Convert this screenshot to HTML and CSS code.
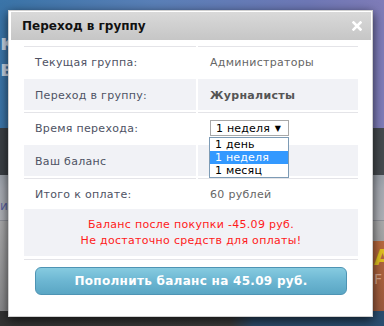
FILE: index.html
```html
<!DOCTYPE html>
<html lang="ru">
<head>
<meta charset="utf-8">
<link rel="stylesheet" href="styles.css">
</head>
<body>
<div class="bg">
  <div class="band band-top"><span class="bg-letter bg-k">к</span><span class="bg-letter bg-v">ве</span></div>
  <div class="band band-dark"></div>
  <div class="band band-grey"><span class="bg-small">ис</span></div>
  <div class="band band-low"><div class="promo"><span class="promo-a">A</span><span class="promo-f">F</span></div></div>
  <div class="band band-foot"></div>
</div>

<div class="modal">
  <div class="modal-head">
    <span class="modal-title">Переход в группу</span>
    <svg class="modal-close" width="10" height="10" viewBox="0 0 10 10"><path d="M1.5 1.5 L8.5 8.5 M8.5 1.5 L1.5 8.5" stroke="#fff" stroke-width="2.6" stroke-linecap="square"/></svg>
  </div>
  <div class="modal-body">
    <div class="row">
      <div class="cell label">Текущая группа:</div>
      <div class="cell value">Администраторы</div>
    </div>
    <div class="row alt">
      <div class="cell label">Переход в группу:</div>
      <div class="cell value strong">Журналисты</div>
    </div>
    <div class="row">
      <div class="cell label">Время перехода:</div>
      <div class="cell value">
        <div class="select-wrap">
          <div class="select"><span>1 неделя</span><span class="arrow">▼</span></div>
          <div class="dropdown">
            <div class="opt">1 день</div>
            <div class="opt sel">1 неделя</div>
            <div class="opt">1 месяц</div>
          </div>
        </div>
      </div>
    </div>
    <div class="row alt">
      <div class="cell label">Ваш баланс</div>
      <div class="cell value"></div>
    </div>
    <div class="row">
      <div class="cell label">Итого к оплате:</div>
      <div class="cell value">60 рублей</div>
    </div>
    <div class="message">
      <div>Баланс после покупки -45.09 руб.</div>
      <div>Не достаточно средств для оплаты!</div>
    </div>
    <div class="btn">Пополнить баланс на 45.09 руб.</div>
  </div>
</div>
</body>
</html>
```

FILE: styles.css
```css
html, body {
  margin: 0;
  padding: 0;
  width: 384px;
  height: 326px;
  overflow: hidden;
  font-family: "DejaVu Sans", Verdana, sans-serif;
}
.bg {
  position: relative;
  width: 384px;
  height: 326px;
  display: flex;
  flex-direction: column;
}
.band { position: relative; flex: none; }
.band-top {
  height: 128px;
  background: linear-gradient(90deg, #3a74a8 0%, #5a80b8 40%, #6e78b6 80%, #7f7cb8 100%);
}
.band-dark {
  height: 47px;
  background: linear-gradient(90deg, #3a3f44, #454a4e);
}
.band-grey {
  height: 45px;
  background: linear-gradient(180deg, #9aa0a8 0%, #a6aab2 30%, #aeb0b6 100%);
  border-bottom: 1px solid #8e9098;
}
.band-low {
  height: 90px;
  background: linear-gradient(180deg, #a9a9aa, #8a8a8c);
}
.band-foot {
  flex: 1;
  background: linear-gradient(90deg, #333 0%, #3a3a3a 60%, #2c4a68 66%, #2a4e70 100%);
}
.bg-letter {
  position: absolute;
  left: 0;
  color: #c8d4e4;
  font-weight: bold;
  font-size: 22px;
}
.bg-k { top: 30px; }
.bg-v { top: 56px; }
.bg-small {
  position: absolute;
  left: 0;
  top: 24px;
  font-size: 12px;
  color: #5a62a0;
}
.promo {
  position: absolute;
  right: 0;
  top: 20px;
  width: 34px;
  height: 70px;
  background: linear-gradient(180deg, #b8683c, #9a5a3e);
}
.promo-a {
  position: absolute;
  left: 24px;
  top: 4px;
  font-weight: bold;
  font-size: 22px;
  color: #e0c020;
}
.promo-f {
  position: absolute;
  left: 24px;
  top: 30px;
  font-size: 14px;
  color: #d8a890;
}

.modal {
  position: absolute;
  left: 8px;
  top: 10px;
  width: 363px;
  height: 305px;
  background: #fff;
  border: 1px solid #d0d0d0;
  box-shadow: 0 3px 10px rgba(0, 0, 0, 0.7);
  display: flex;
  flex-direction: column;
}
.modal-head {
  margin: 1px 1px 0 2px;
  height: 28px;
  background: linear-gradient(180deg, #d9d9d9, #c6c6c6);
  display: flex;
  align-items: center;
  justify-content: space-between;
  padding: 0 9px 0 11px;
}
.modal-title {
  font-weight: bold;
  font-size: 12px;
  color: #111;
}
.modal-close {
  display: block;
}
.modal-body {
  padding: 6px 14px 0 15px;
  display: flex;
  flex-direction: column;
}
.row {
  display: grid;
  grid-template-columns: 172px 160px;
  column-gap: 2px;
  margin-bottom: 2px;
}
.cell {
  height: 30px;
  border-top: 1px solid #e4e4e8;
  display: flex;
  align-items: center;
  font-size: 11px;
  letter-spacing: 0.3px;
}
.alt .cell {
  background: #f1f2f6;
  border-top-color: #f1f2f6;
}
.label {
  padding-left: 11px;
  color: #4e5264;
}
.value {
  padding-left: 12px;
  color: #666;
}
.strong {
  font-weight: bold;
  color: #555;
}
.select-wrap {
  position: relative;
}
.select {
  box-sizing: border-box;
  width: 79px;
  height: 16px;
  border: 1px solid #a8a8a8;
  background: #fff;
  display: flex;
  align-items: center;
  justify-content: space-between;
  padding: 0 7px 0 5px;
  font-size: 11px;
  color: #000;
  white-space: nowrap;
  letter-spacing: 0.2px;
}
.arrow {
  font-size: 8px;
}
.dropdown {
  position: absolute;
  left: -1px;
  top: 17px;
  width: 80px;
  border: 1px solid #7d9bb5;
  background: #fff;
  box-sizing: border-box;
}
.opt {
  height: 13px;
  line-height: 13px;
  padding-left: 5px;
  font-size: 11px;
  color: #000;
  white-space: nowrap;
  letter-spacing: 0.2px;
}
.opt.sel {
  background: #3399ff;
  color: #fff;
}
.message {
  height: 47px;
  background: #f1f2f6;
  border-bottom: 1px solid #fff;
  box-shadow: 0 2px 0 #fff, 0 3px 0 #e4e4e8;
  display: flex;
  flex-direction: column;
  align-items: center;
  justify-content: center;
  gap: 3px;
  color: #ff1a1a;
  font-size: 11px;
  letter-spacing: 0.3px;
  margin-top: -2px;
}
.btn {
  margin: 10px 11px 0 11px;
  height: 26px;
  border: 1px solid #4e94b4;
  border-radius: 6px;
  background: linear-gradient(180deg, #86cbe0 0%, #6cb6d2 50%, #5aa6c4 100%);
  color: #fff;
  font-weight: bold;
  font-size: 12px;
  display: flex;
  align-items: center;
  justify-content: center;
  letter-spacing: 0.3px;
}
```
